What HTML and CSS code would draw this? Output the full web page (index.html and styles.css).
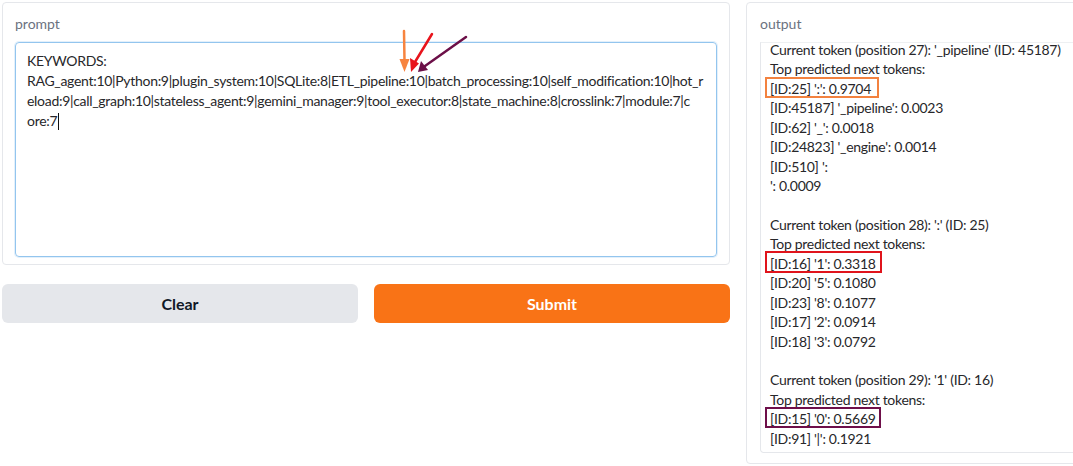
FILE: index.html
```html
<!DOCTYPE html>
<html>
<head>
<meta charset="utf-8">
<link rel="stylesheet" href="styles.css">
</head>
<body>
<div class="page">
  <div class="col col-left">
    <div class="panel prompt-panel">
      <div class="label">prompt</div>
      <div class="textarea">
        <div class="tline">KEYWORDS:</div>
        <div class="tline">RAG_agent:10|Python:9|plugin_system:10|SQLite:8|ETL_pipeline:10|batch_processing:10|self_modification:10|hot_r</div>
        <div class="tline">eload:9|call_graph:10|stateless_agent:9|gemini_manager:9|tool_executor:8|state_machine:8|crosslink:7|module:7|c</div>
        <div class="tline">ore:7<span class="caret"></span></div>
      </div>
    </div>
    <div class="buttons">
      <button class="btn btn-secondary">Clear</button>
      <button class="btn btn-primary">Submit</button>
    </div>
  </div>
  <div class="col col-right">
    <div class="panel output-panel">
      <div class="label">output</div>
      <div class="output-box">
        <div class="oline">Current token (position 27): '_pipeline' (ID: 45187)</div>
        <div class="oline">Top predicted next tokens:</div>
        <div class="oline"><span class="mark mark-orange">[ID:25] ':': 0.9704</span></div>
        <div class="oline">[ID:45187] '_pipeline': 0.0023</div>
        <div class="oline">[ID:62] '_': 0.0018</div>
        <div class="oline">[ID:24823] '_engine': 0.0014</div>
        <div class="oline">[ID:510] ':</div>
        <div class="oline">': 0.0009</div>
        <div class="oline blank"></div>
        <div class="oline">Current token (position 28): ':' (ID: 25)</div>
        <div class="oline">Top predicted next tokens:</div>
        <div class="oline"><span class="mark mark-red">[ID:16] '1': 0.3318</span></div>
        <div class="oline">[ID:20] '5': 0.1080</div>
        <div class="oline">[ID:23] '8': 0.1077</div>
        <div class="oline">[ID:17] '2': 0.0914</div>
        <div class="oline">[ID:18] '3': 0.0792</div>
        <div class="oline blank"></div>
        <div class="oline">Current token (position 29): '1' (ID: 16)</div>
        <div class="oline">Top predicted next tokens:</div>
        <div class="oline"><span class="mark mark-purple">[ID:15] '0': 0.5669</span></div>
        <div class="oline">[ID:91] '|': 0.1921</div>
      </div>
    </div>
  </div>
  <svg class="annotations" width="1073" height="466" viewBox="0 0 1073 466">
    <g stroke-linecap="round">
      <line x1="404" y1="31" x2="404.5" y2="61" stroke="#f7843f" stroke-width="2.5"/>
      <polygon points="399.5,59 409.5,59 404.5,72" fill="#f7843f"/>
      <line x1="432" y1="34" x2="415" y2="62" stroke="#e8141c" stroke-width="2.5"/>
      <polygon points="410,58 419,63.5 411,72" fill="#e8141c"/>
      <line x1="466" y1="37" x2="425" y2="66" stroke="#6c0f48" stroke-width="2.5"/>
      <polygon points="421,61 428,70 418,72" fill="#6c0f48"/>
    </g>
  </svg>
</div>
</body>
</html>
```
FILE: styles.css
```css
html, body {
  margin: 0;
  padding: 0;
  background: #ffffff;
  overflow: hidden;
}
body {
  font-family: Lato, "Noto Sans", sans-serif;
  font-size: 14px;
  color: #27272a;
}
.page {
  position: relative;
  display: flex;
  gap: 16px;
  padding: 2px;
  width: 1600px;
  height: 466px;
  box-sizing: border-box;
}
.col-left {
  width: 728px;
  flex: none;
  display: flex;
  flex-direction: column;
  gap: 19px;
}
.col-right {
  width: 728px;
  flex: none;
}
.panel {
  border: 1px solid #e5e7eb;
  border-radius: 4px;
  background: #fff;
  box-sizing: border-box;
}
.prompt-panel {
  height: 263px;
  padding: 12px 12px 8px 12px;
}
.output-panel {
  height: 462px;
  padding: 12px 12px 10px 13px;
}
.label {
  color: #6b7280;
  font-size: 14px;
  line-height: 18px;
  height: 27px;
}
.textarea {
  height: 215px;
  box-sizing: border-box;
  border: 1px solid #93c5ee;
  box-shadow: 0 0 0 1px #e3f0fb;
  border-radius: 4px;
  padding: 8px 11px;
  line-height: 20px;
  color: #27272a;
  letter-spacing: -0.3px;
}
.tline {
  height: 20px;
  white-space: nowrap;
}
.caret {
  display: inline-block;
  width: 1px;
  height: 17px;
  background: #111;
  vertical-align: -4px;
  margin-left: 1px;
}
.buttons {
  display: flex;
  gap: 16px;
}
.btn {
  flex: 1;
  height: 39px;
  border: none;
  border-radius: 6px;
  font-family: Lato, "Noto Sans", sans-serif;
  font-weight: 700;
  font-size: 16px;
}
.btn-secondary {
  background: #e5e7eb;
  color: #111827;
}
.btn-primary {
  background: #f97316;
  color: #ffffff;
}
.output-box {
  height: 411px;
  box-sizing: border-box;
  border: 1px solid #e5e7eb;
  border-top-color: #eef0f2;
  border-radius: 0 0 4px 4px;
  padding: 0 9px;
  overflow: hidden;
  letter-spacing: -0.3px;
}
.oline {
  height: 19.45px;
  line-height: 19.45px;
  white-space: pre;
}
.output-box .oline:first-child {
  margin-top: -3px;
}
.mark {
  position: relative;
}
.mark::after {
  content: "";
  position: absolute;
  left: -5px;
  top: -3px;
  bottom: -1px;
  border: 2.5px solid;
  box-sizing: border-box;
}
.mark-orange::after {
  border-color: #f3823f;
  right: -8px;
}
.mark-red::after {
  border-color: #e0141c;
  right: -6px;
  top: -4px;
}
.mark-purple::after {
  border-color: #6e0f4a;
  right: -5px;
}
.annotations {
  position: absolute;
  left: 0;
  top: 0;
  pointer-events: none;
}
```
